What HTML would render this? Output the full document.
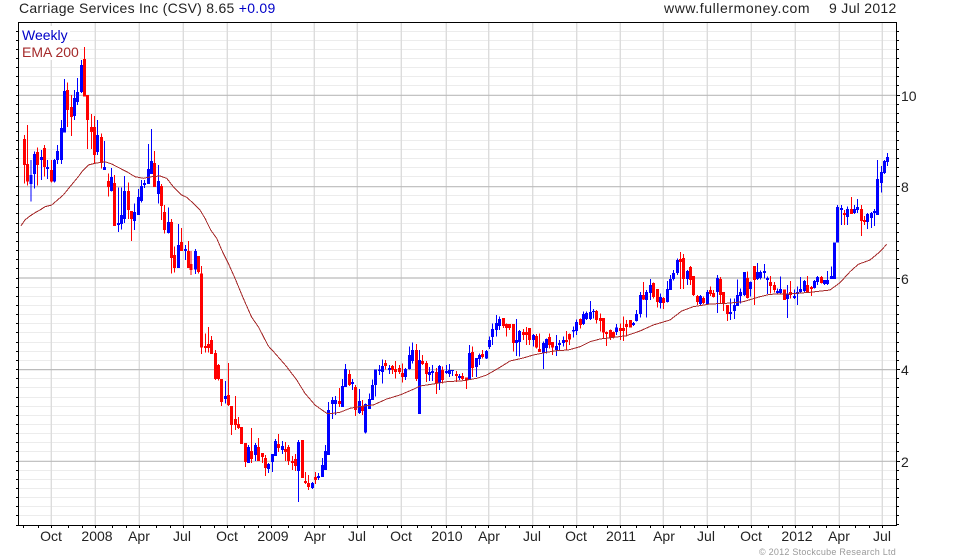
<!DOCTYPE html>
<html><head><meta charset="utf-8"><style>
html,body{margin:0;padding:0;background:#fff}
svg{display:block}
text{font-family:"Liberation Sans",sans-serif;font-size:14px;fill:#222}
.w,.f{fill:none}
.w{stroke-width:3}.f{stroke-width:9}
.r{stroke:#f00}.b{stroke:#00f}
.bars path{shape-rendering:crispEdges}
.ax text{text-anchor:middle}
</style></head><body>
<svg width="980" height="560" viewBox="0 0 980 560" xmlns="http://www.w3.org/2000/svg">
<rect width="980" height="560" fill="#fff"/>
<path shape-rendering="crispEdges" fill="none" stroke="#ececec" d="M19 31.5H896M19 40.5H896M19 49.5H896M19 58.5H896M19 67.5H896M19 76.5H896M19 85.5H896M19 104.5H896M19 113.5H896M19 122.5H896M19 131.5H896M19 140.5H896M19 149.5H896M19 158.5H896M19 167.5H896M19 176.5H896M19 195.5H896M19 204.5H896M19 213.5H896M19 223.5H896M19 232.5H896M19 241.5H896M19 250.5H896M19 259.5H896M19 268.5H896M19 287.5H896M19 296.5H896M19 305.5H896M19 314.5H896M19 323.5H896M19 332.5H896M19 342.5H896M19 351.5H896M19 360.5H896M19 378.5H896M19 387.5H896M19 397.5H896M19 406.5H896M19 415.5H896M19 424.5H896M19 433.5H896M19 442.5H896M19 451.5H896M19 470.5H896M19 479.5H896M19 488.5H896M19 497.5H896M19 506.5H896M19 515.5H896"/>
<path fill="none" stroke="#dcdcdc" stroke-width="1.4" d="M51.3 23V525M95.3 23V525M139.3 23V525M183.3 23V525M227.3 23V525M271.3 23V525M314.3 23V525M357.3 23V525M401.3 23V525M446.3 23V525M488.7 23V525M532.7 23V525M576.7 23V525M620.3 23V525M663.3 23V525M707.3 23V525M751.3 23V525M795.3 23V525M839.3 23V525M882.3 23V525"/>
<path fill="none" stroke="#bbb" stroke-width="1.2" d="M19 95.3H896M19 186.7H896M19 278H896M19 369.6H896M19 461.3H896"/>
<rect x="20" y="26" width="50" height="17" fill="#fff"/>
<rect x="20" y="43" width="60" height="17" fill="#fff"/>

<g class="bars">
<g transform="translate(20,40) scale(.33333)">
<path class="w r" d="M13 285V430M22 255V437M52 323V437M73 315V410M94 360V427M142 127V261M154 165V288M193 21V170M202 165V327M214 222V327M223 228V372M244 280V385M265 400V470M283 405V558M325 427V537M334 513V603M403 333V441M424 432V540M433 495V580M454 537V700M463 620V698M484 564V633M505 603V684"/>
<path class="f r" d="M13 297V375M22 372V425M52 336V375M73 324V381M94 390V425M142 150V210M154 201V231M193 57V170M202 165V240M214 261V276M223 261V345M244 291V369M265 423V441M283 429V558M325 453V510M334 513V537M403 369V441M424 438V498M433 516V570M454 546V654M463 645V684M484 606V633M505 633V684"/>
<path class="w b" d="M33 360V485M43 335V445M64 330V420M82 360V417M103 357V427M112 315V372M124 240V372M133 117V277M163 150V240M172 114V195M184 60V159M232 240V345M253 303V390M274 384V454M295 442V576M304 442V568M313 408V549M343 490V570M355 447V525M364 420V487M373 420V444M385 312V432M394 267V402M415 375V490M445 502V580M475 552V684M496 615V660"/>
<path class="f b" d="M33 405V432M43 342V402M64 351V360M82 381V387M103 360V425M112 333V360M124 264V360M133 153V277M163 174V228M172 156V186M184 75V156M232 285V336M253 381V390M274 411V453M295 549V555M304 525V552M313 453V537M343 516V543M355 471V525M364 438V483M373 429V435M385 387V432M394 363V402M415 423V462M445 546V579M475 615V684M496 627V633"/>
</g>
<g transform="translate(190,230) scale(.33333)">
<path class="w r" d="M3 63V135M25 78V130M34 108V372M46 310V368M55 291V368M64 318V372M76 360V450M85 402V452M94 447V528M115 399V528M124 528V615M136 498V600M145 561V597M154 591V642M166 639V711M184 594V699M205 624V693M217 669V699M226 675V738M265 612V666M286 636V693M295 645V705M307 678V720M316 672V723M337 630V744M346 726V762M355 735V780M376 726V762M448 474V531M478 420V468M496 465V558"/>
<path class="f r" d="M3 102V120M25 78V126M34 130V353M46 348V354M55 342V354M64 330V372M76 369V447M85 405V447M94 447V516M115 495V525M124 528V585M136 567V585M145 582V594M154 591V642M166 639V696M184 663V687M205 651V693M217 669V681M226 684V714M265 642V654M286 657V666M295 651V693M307 693V699M316 687V708M337 630V744M346 753V759M355 759V771M376 741V750M448 513V522M478 432V465M496 471V540"/>
<path class="w b" d="M16 57V132M106 453V520M175 645V699M196 639V693M235 699V729M247 672V726M256 627V678M277 633V672M325 630V816M367 756V777M385 729V750M397 684V741M406 645V720M415 516V675M427 501V567M436 498V555M457 447V531M466 402V471M487 447V480M508 477V552"/>
<path class="f b" d="M16 63V118M106 498V507M175 651V699M196 645V675M235 702V717M247 672V696M256 633V678M277 648V660M325 636V723M367 759V774M385 738V744M397 705V741M406 663V720M415 540V675M427 510V522M436 510V522M457 468V531M466 417V471M487 456V462M508 513V549"/>
</g>
<g transform="translate(330,300) scale(.33333)">
<path class="w r" d="M97 300V345M166 180V208M187 195V222M196 183V235M208 195V222M217 190V248M259 132V243M277 165V195M289 183V246M319 204V282M337 200V250M379 213V246M397 219V240M409 232V267M427 140V231M457 150V175M520 54V84M529 70V110M538 72V90M550 72V154M580 87V120M589 81V135M598 84V135M619 102V145M628 100V155M658 100V145M667 130V165M709 93V150M718 100V135M751 55V85M799 30V70M811 40V95M820 54V115M829 95V138M841 88V120M850 95V115M871 70V120M880 50V123M889 60V110"/>
<path class="f r" d="M97 318V333M166 189V198M187 198V210M196 207V216M208 204V216M217 219V231M259 150V237M277 183V192M289 189V222M319 216V249M337 210V240M379 222V228M397 228V237M409 233V240M427 156V204M457 162V171M520 54V78M529 72V84M538 72V84M550 72V129M580 96V105M589 96V105M598 84V120M619 108V142M628 147V156M658 111V135M667 126V143M709 120V126M718 102V118M751 57V75M799 33V60M811 54V63M820 54V98M829 96V102M841 90V114M850 96V111M871 84V93M880 84V93M889 72V81"/>
<path class="w b" d="M106 310V400M118 280V325M127 238V300M136 209V290M148 195V225M157 178V250M178 195V222M226 204V240M238 140V209M247 127V190M268 150V342M298 201V243M307 195V243M328 195V270M349 195V222M358 192V231M367 210V228M388 222V240M418 135V240M439 175V231M448 160V195M469 150V177M478 110V147M487 70V135M499 45V110M508 50V90M559 57V168M568 90V170M610 102V140M640 125V207M649 115V160M679 105V168M688 120V150M700 110V140M730 80V112M739 58V105M760 35V75M769 35V60M781 3V60M790 27V55M859 72V105"/>
<path class="f b" d="M106 312V398M118 297V327M127 255V300M136 209V255M148 208V213M157 198V216M178 204V210M226 207V231M238 165V207M247 150V183M268 180V342M298 216V225M307 213V219M328 198V249M349 213V219M358 210V222M367 210V213M388 228V234M418 159V240M439 174V201M448 165V177M469 153V175M478 120V141M487 87V111M499 69V90M508 57V78M559 120V129M568 93V126M610 105V120M640 129V159M649 117V144M679 138V150M688 129V135M700 120V129M730 90V95M739 66V93M760 42V72M769 39V57M781 36V57M790 33V36M859 82V96"/>
</g>
<g transform="translate(610,230) scale(.33333)">
<path class="w r" d="M61 270V292M100 156V210M130 158V205M142 177V232M160 201V237M211 66V177M220 72V177M241 108V165M250 138V198M262 195V225M280 200V222M301 170V198M310 180V203M331 141V220M340 186V243M352 225V273M412 125V205M433 108V225M481 138V190M493 156V188M523 178V210M541 153V205M592 138V186M604 168V198M634 138V160"/>
<path class="f r" d="M61 270V293M100 195V209M130 159V201M142 177V216M160 204V219M211 87V96M220 84V147M241 111V150M250 138V195M262 198V216M280 204V219M301 180V192M310 189V201M331 147V195M340 186V219M352 225V252M412 144V204M433 108V150M481 156V168M493 165V180M523 178V210M541 186V195M592 165V186M604 171V177M634 141V159"/>
<path class="w b" d="M70 276V288M79 240V275M91 186V263M109 180V263M121 147V210M151 190V235M172 153V218M181 135V180M190 120V152M202 85V135M232 120V165M271 195V225M292 180V222M322 135V249M361 205V270M373 205V267M382 148V228M391 175V220M403 126V198M421 155V199M442 99V150M451 122V148M463 102V145M472 140V192M502 175V190M511 139V190M532 165V264M553 178V207M562 170V225M571 141V190M583 150V186M613 150V175M622 138V165M643 150V165M652 123V165M664 110V147M673 38V147"/>
<path class="f b" d="M70 279V285M79 252V273M91 195V252M109 186V210M121 165V189M151 201V219M172 177V216M181 147V180M190 129V147M202 90V129M232 123V147M271 198V222M292 186V222M322 144V186M361 246V252M373 225V243M382 195V228M391 186V198M403 126V195M421 156V177M442 126V147M451 126V144M463 123V129M472 144V150M502 183V189M511 177V189M532 192V207M553 198V204M562 186V192M571 177V186M583 153V183M613 153V174M622 141V156M643 150V162M652 150V162M664 138V147M673 38V147"/>
</g>
<g transform="translate(800,140) scale(.33333)">
<path class="w r" d="M133 210V255M154 171V222M184 195V288M193 228V255"/>
<path class="f r" d="M133 219V225M154 207V222M184 207V243M193 240V246"/>
<path class="w b" d="M112 195V308M124 195V255M142 200V255M163 195V222M172 177V219M202 219V267M214 216V264M223 207V258M232 60V225M244 78V158M253 60V102M262 39V78"/>
<path class="f b" d="M112 201V308M124 204V210M142 207V231M163 207V219M172 201V210M202 222V246M214 219V234M223 213V219M232 117V225M244 96V129M253 63V99M262 51V66"/>
</g>
</g>

<path fill="none" stroke="#a52a2a" stroke-width="1" shape-rendering="crispEdges" d="M21 225.7L25 220L30 216L35 212.7L40 210L45 206.7L51.7 205L58.3 199.3L63.3 195L70 186.7L78.3 176.7L83.3 170L88.3 165L95 163.3L105 161.7L111.7 164L120 168.3L126.7 171.7L135 176.7L143.3 178.3L151.7 176.7L160 176L166.7 178.3L173.3 186.7L181.7 195L186.7 197.3L193.3 203.3L200 210L205 218.3L210.7 230L216.7 238.3L221.7 250L228.3 263.3L235 278.3L243.3 298.3L251.7 317.3L258.3 326.7L268.3 346L275 353.3L286.7 366.7L296.7 380L305 393.3L315 405L326.7 413.3L333.3 413.3L340 412.3L350 408.3L363.3 406L373.3 405L386.7 399L400 395L413.3 389.3L420 386L433.3 384L446.7 381.7L463.3 380.7L476.7 378.3L486.7 375L500 367.3L510 361L523.3 358L533.3 355L546.7 352.3L556.7 350.7L568.3 350L580 346.7L590 341.7L600 339L616.7 337L626.3 335.7L640 331L653.3 325L670 320L681.7 311L693.3 306.7L710 304L726.7 303.3L743.3 301.7L760 296.7L770 294.3L786.7 294L810 292.3L830 290L840 282.7L850 271.7L858.3 264.3L870 260L880 251.7L886.7 244.3"/>

<path shape-rendering="crispEdges" fill="none" stroke="#000" d="M18.5 22.5H896.5V525.5H18.5Z"/>
<path shape-rendering="crispEdges" fill="none" stroke="#000" d="M16 31.5H18M16 40.5H18M16 49.5H18M16 58.5H18M16 67.5H18M16 76.5H18M16 85.5H18M16 95.5H18M16 104.5H18M16 113.5H18M16 122.5H18M16 131.5H18M16 140.5H18M16 149.5H18M16 158.5H18M16 167.5H18M16 176.5H18M16 186.5H18M16 195.5H18M16 204.5H18M16 213.5H18M16 223.5H18M16 232.5H18M16 241.5H18M16 250.5H18M16 259.5H18M16 268.5H18M16 278.5H18M16 287.5H18M16 296.5H18M16 305.5H18M16 314.5H18M16 323.5H18M16 332.5H18M16 342.5H18M16 351.5H18M16 360.5H18M16 369.5H18M16 378.5H18M16 387.5H18M16 397.5H18M16 406.5H18M16 415.5H18M16 424.5H18M16 433.5H18M16 442.5H18M16 451.5H18M16 461.5H18M16 470.5H18M16 479.5H18M16 488.5H18M16 497.5H18M16 506.5H18M16 515.5H18M16 525.5H18
M897 31.5H899M897 40.5H899M897 49.5H899M897 58.5H899M897 67.5H899M897 76.5H899M897 85.5H899M897 95.5H900M897 104.5H899M897 113.5H899M897 122.5H899M897 131.5H899M897 140.5H899M897 149.5H899M897 158.5H899M897 167.5H899M897 176.5H899M897 186.5H900M897 195.5H899M897 204.5H899M897 213.5H899M897 223.5H899M897 232.5H899M897 241.5H899M897 250.5H899M897 259.5H899M897 268.5H899M897 278.5H900M897 287.5H899M897 296.5H899M897 305.5H899M897 314.5H899M897 323.5H899M897 332.5H899M897 342.5H899M897 351.5H899M897 360.5H899M897 369.5H900M897 378.5H899M897 387.5H899M897 397.5H899M897 406.5H899M897 415.5H899M897 424.5H899M897 433.5H899M897 442.5H899M897 451.5H899M897 461.5H900M897 470.5H899M897 479.5H899M897 488.5H899M897 497.5H899M897 506.5H899M897 515.5H899M897 524.5H899
M23.5 526V528M38.5 526V528M51.5 526V528M68.5 526V528M82.5 526V528M95.5 526V528M112.5 526V528M126.5 526V528M139.5 526V528M156.5 526V528M170.5 526V528M183.5 526V528M200.5 526V528M214.5 526V528M227.5 526V528M244.5 526V528M258.5 526V528M271.5 526V528M288.5 526V528M302.5 526V528M314.5 526V528M329.5 526V528M343.5 526V528M357.5 526V528M373.5 526V528M387.5 526V528M401.5 526V528M417.5 526V528M431.5 526V528M446.5 526V528M461.5 526V528M475.5 526V528M488.5 526V528M505.5 526V528M519.5 526V528M532.5 526V528M549.5 526V528M563.5 526V528M576.5 526V528M593.5 526V528M607.5 526V528M620.5 526V528M636.5 526V528M650.5 526V528M663.5 526V528M680.5 526V528M694.5 526V528M707.5 526V528M724.5 526V528M738.5 526V528M751.5 526V528M768.5 526V528M782.5 526V528M795.5 526V528M812.5 526V528M826.5 526V528M839.5 526V528M855.5 526V528M869.5 526V528M882.5 526V528"/>

<text x="19" y="13" style="letter-spacing:.27px">Carriage Services Inc (CSV) 8.65 <tspan fill="#0000c8" style="fill:#0000c8">+0.09</tspan></text>
<text x="664" y="13" style="letter-spacing:.58px">www.fullermoney.com</text>
<text x="829" y="13" style="letter-spacing:.3px">9 Jul 2012</text>
<text x="22" y="40" style="fill:#0000c8">Weekly</text>
<text x="22" y="57" style="fill:#a52a2a">EMA 200</text>
<text x="901" y="101">10</text>
<text x="901" y="192">8</text>
<text x="901" y="284">6</text>
<text x="901" y="375">4</text>
<text x="901" y="467">2</text>
<g class="ax">
<text x="51" y="541">Oct</text><text x="97" y="541">2008</text><text x="139" y="541">Apr</text><text x="182" y="541">Jul</text><text x="227" y="541">Oct</text><text x="273" y="541">2009</text><text x="315" y="541">Apr</text><text x="357" y="541">Jul</text><text x="401" y="541">Oct</text><text x="447" y="541">2010</text><text x="489" y="541">Apr</text><text x="532" y="541">Jul</text><text x="576" y="541">Oct</text><text x="621" y="541">2011</text><text x="664" y="541">Apr</text><text x="706" y="541">Jul</text><text x="751" y="541">Oct</text><text x="797" y="541">2012</text><text x="839" y="541">Apr</text><text x="882" y="541">Jul</text>
</g>
<text x="759" y="555" style="font-size:9px;fill:#9a9a9a;letter-spacing:.25px">© 2012 Stockcube Research Ltd</text>
</svg>
</body></html>
